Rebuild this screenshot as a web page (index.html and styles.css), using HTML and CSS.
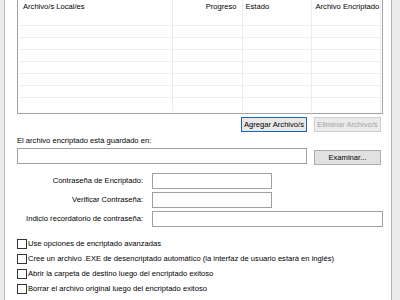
FILE: index.html
```html
<!DOCTYPE html>
<html lang="es">
<head>
<meta charset="utf-8">
<title>Encriptar archivos</title>
<link rel="stylesheet" href="styles.css">
</head>
<body>
<div class="frame-left"></div>
<main class="panel">
  <div class="listview">
    <table class="grid">
      <thead>
        <tr>
          <th class="c1">Archivo/s Local/es</th>
          <th class="c2">Progreso</th>
          <th class="c3">Estado</th>
          <th class="c4">Archivo Encriptado</th>
        </tr>
      </thead>
      <tbody>
        <tr><td></td><td></td><td></td><td></td></tr>
        <tr><td></td><td></td><td></td><td></td></tr>
        <tr><td></td><td></td><td></td><td></td></tr>
        <tr><td></td><td></td><td></td><td></td></tr>
        <tr><td></td><td></td><td></td><td></td></tr>
        <tr><td></td><td></td><td></td><td></td></tr>
        <tr class="last"><td></td><td></td><td></td><td></td></tr>
      </tbody>
    </table>
  </div>
  <div class="list-actions">
    <button class="btn focused">Agregar Archivo/s</button>
    <button class="btn" disabled>Eliminar Archivo/s</button>
  </div>
  <div class="caption">El archivo encriptado está guardado en:</div>
  <div class="dest-row">
    <input class="field dest" type="text">
    <button class="btn browse">Examinar...</button>
  </div>
  <div class="form">
    <label class="lbl">Contraseña de Encriptado:</label>
    <input class="field short" type="password">
    <label class="lbl">Verificar Contraseña:</label>
    <input class="field short" type="password">
    <label class="lbl">Indicio recordatorio de contraseña:</label>
    <input class="field long" type="text">
  </div>
  <div class="checks">
    <label class="check"><span class="box"></span>Use opciones de encriptado avanzadas</label>
    <label class="check"><span class="box"></span>Cree un archivo .EXE de desencriptado automático (la interfaz de usuario estará en inglés)</label>
    <label class="check"><span class="box"></span>Abrir la carpeta de destino luego del encriptado exitoso</label>
    <label class="check"><span class="box"></span>Borrar el archivo original luego del encriptado exitoso</label>
  </div>
</main>
<div class="frame-right"></div>
</body>
</html>
```
FILE: styles.css
```css
html, body {
  margin: 0;
  padding: 0;
  height: 300px;
  overflow: hidden;
  background: #ffffff;
}
body {
  display: flex;
  font-family: "Liberation Sans", Arial, sans-serif;
  font-size: 7.6px;
  color: #000;
}
.frame-left {
  width: 4px;
  background: #ececec;
  border-right: 1px solid #bcbcbc;
  flex: none;
}
.frame-right {
  width: 8px;
  background: #ececec;
  border-left: 1px solid #b4b4b4;
  flex: none;
}
.panel {
  flex: 1;
  padding: 0 8px 0 12px;
  display: flex;
  flex-direction: column;
  background: #fff;
}
.listview {
  margin-top: -1px;
  height: 115px;
  flex: none;
  box-sizing: border-box;
  border: 1px solid #a3a3a3;
  padding-left: 2px;
  overflow: hidden;
}
.grid {
  border-collapse: collapse;
  table-layout: fixed;
}
.grid th, .grid td {
  border-right: 1px solid #ebebeb;
  padding: 0;
  box-sizing: border-box;
}
.grid th {
  height: 25px;
  vertical-align: top;
  font-weight: normal;
  text-align: left;
  padding-top: 2px;
  line-height: 10px;
}
.grid .c1 { width: 152px; padding-left: 3px; }
.grid .c2 { width: 70px; text-align: right; padding-right: 5px; }
.grid .c3 { width: 69px; padding-left: 3px; }
.grid .c4 { width: 69px; padding-left: 4px; }
.grid td {
  height: 12px;
  border-top: 1px solid #efefef;
}
.grid tr.last td { height: 14px; }
.list-actions {
  display: flex;
  justify-content: flex-end;
  gap: 7px;
  margin-top: 3px;
  padding-right: 2px;
}
.btn {
  font-family: inherit;
  font-size: 7.6px;
  height: 15px;
  width: 67px;
  padding: 0;
  background: #e1e1e1;
  border: 1px solid #adadad;
  color: #000;
  line-height: 13px;
  box-sizing: border-box;
}
.btn.focused {
  width: 66px;
  background: #e8e8e8;
  border-color: #1f63a8;
}
.btn:disabled {
  background: #ebebeb;
  border-color: #cfcfcf;
  color: #a2a2a2;
}
.caption {
  margin-top: 4px;
  line-height: 10px;
  height: 10px;
}
.dest-row {
  display: flex;
  gap: 7px;
  margin-top: 2px;
  align-items: flex-start;
}
.field {
  box-sizing: border-box;
  height: 16px;
  border: 1px solid #a0a0a0;
  background: #fff;
  padding: 0 2px;
  margin: 0;
  font: inherit;
}
.dest { width: 290px; }
.browse { margin-top: 2px; }
.form {
  display: grid;
  grid-template-columns: 126px auto;
  column-gap: 9px;
  row-gap: 3px;
  margin-top: 8px;
  align-items: center;
  justify-items: start;
}
.lbl {
  justify-self: end;
  line-height: 10px;
}
.short { width: 120px; }
.long { width: 231px; }
.checks {
  margin-top: 9px;
  display: flex;
  flex-direction: column;
}
.check {
  display: flex;
  align-items: center;
  height: 15px;
  gap: 1px;
  white-space: nowrap;
}
.box {
  width: 10px;
  height: 10px;
  box-sizing: border-box;
  border: 1px solid #333;
  background: #fff;
  flex: none;
}
```
